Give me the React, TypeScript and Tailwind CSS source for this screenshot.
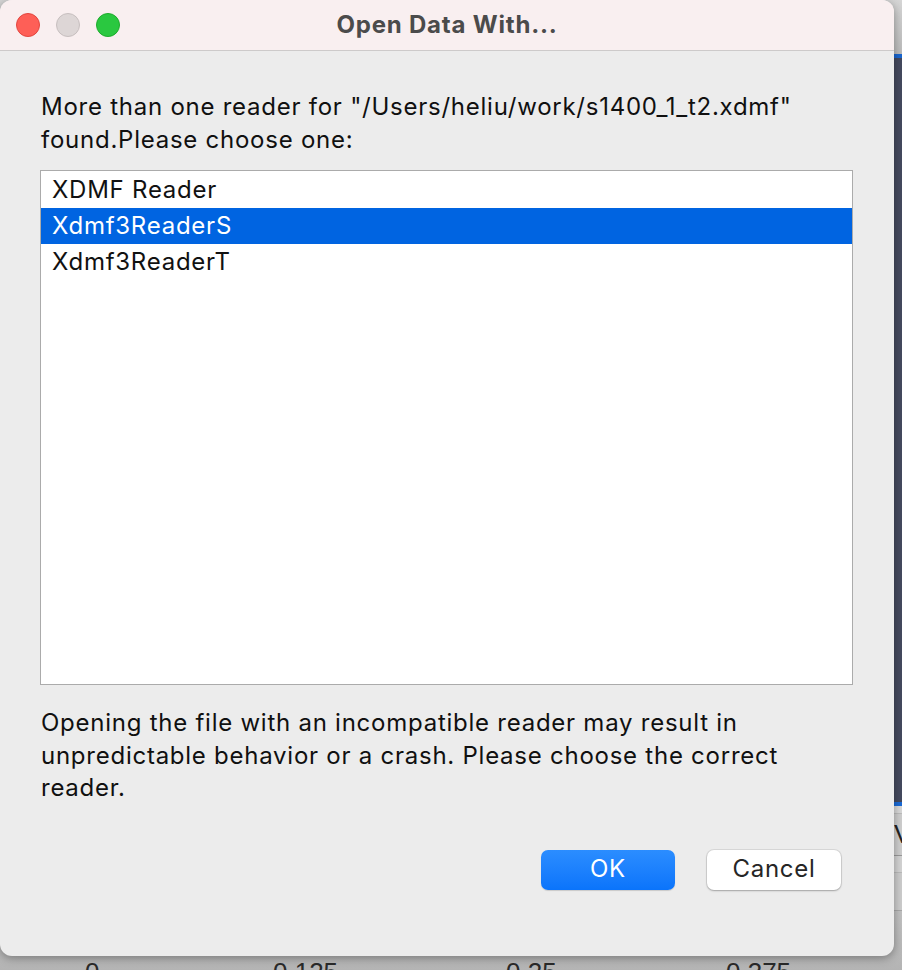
import { useState } from "react";

const readers = ["XDMF Reader", "Xdmf3ReaderS", "Xdmf3ReaderT"];

const axisLabels = [
    { label: "0", cls: "left-[85px]" },
    { label: "0.125", cls: "left-[273px]" },
    { label: "0.25", cls: "left-[506px]" },
    { label: "0.375", cls: "left-[726px]" },
];

const TrafficLights = () => (
    <div className="flex items-center gap-4 pl-4">
        <span className="w-6 h-6 rounded-full bg-[#fe5f57] border border-[#e2463f]" />
        <span className="w-6 h-6 rounded-full bg-[#ddd6d6] border border-[#c7bfbf]" />
        <span className="w-6 h-6 rounded-full bg-[#2ac840] border border-[#1eac2c]" />
    </div>
);

export default function App() {
    const [selected, setSelected] = useState(1);

    return (
        <div className="relative w-[902px] h-[970px] overflow-hidden bg-[#b9b9b9] font-['Inter','Noto_Sans',sans-serif]">
            {/* app behind the dialog */}
            <div className="flex flex-col h-full">
                <div className="h-[54px] bg-gradient-to-b from-[#d6d6d6] to-[#bcbcbc]" />
                <div className="h-[4px] bg-[#1966d0]" />
                <div className="h-[744px] bg-[#454a5f]" />
                <div className="h-[4px] bg-[#1a6ad6]" />
                <div className="h-[8px] bg-[#d9d9d9] border-b border-[#bdbdbd]" />
                <div className="h-[42px] bg-[#cfcfcf] border-b border-[#9a9a9a] flex items-center pl-[894px] text-[26px] text-[#222] font-['Liberation_Sans',sans-serif]">
                    Vi
                </div>
                <div className="h-[17px] bg-[#d4d4d4] border-b border-[#bbbbbb]" />
                <div className="h-[38px] bg-[#cdcdcd] border-b border-[#a8a8a8]" />
                <div className="relative flex-1 bg-gradient-to-b from-[#c2c2c2] to-[#b4b4b4]">
                    {axisLabels.map((a) => (
                        <span
                            key={a.label}
                            className={`absolute top-[48px] ${a.cls} text-[26px] leading-none text-[#2a2a2a] font-['Liberation_Sans',sans-serif]`}>
                            {a.label}
                        </span>
                    ))}
                </div>
            </div>

            {/* dialog window */}
            <div className="absolute left-0 top-0 w-[894px] h-[956px] rounded-[12px] overflow-hidden bg-[#ececec] shadow-[0_2px_10px_rgba(0,0,0,0.35)] flex flex-col">
                <div className="relative h-[51px] shrink-0 bg-[#f9eff0] border-b border-[#cdcaca] flex items-center">
                    <TrafficLights />
                    <div className="absolute inset-0 flex items-center justify-center text-[24px] tracking-[0.8px] font-bold text-[#4b4b4b]">
                        Open Data With...
                    </div>
                </div>

                <div className="flex flex-col px-[40px] pt-[40px] text-[24px] tracking-[0.75px] leading-[32.5px] text-[#101010]">
                    <p className="pl-px whitespace-nowrap">
                        More than one reader for "/Users/heliu/work/s1400_1_t2.xdmf"
                        <br />
                        found.Please choose one:
                    </p>

                    <div className="mt-[14px] w-[813px] h-[515px] bg-white border border-[#ababab] pt-px">
                        {readers.map((r, i) => (
                            <div
                                key={r}
                                onClick={() => setSelected(i)}
                                className={`h-[36px] pl-[11px] flex items-center ${i === selected ? "bg-[#0064e1] text-white" : "text-[#111]"}`}>
                                {r}
                            </div>
                        ))}
                    </div>

                    <p className="pl-px mt-[22px] whitespace-nowrap">
                        Opening the file with an incompatible reader may result in
                        <br />
                        unpredictable behavior or a crash. Please choose the correct
                        <br />
                        reader.
                    </p>

                    <div className="flex justify-end gap-8 mt-[45px] pr-[13px]">
                        <button className="w-[134px] h-[40px] rounded-[7px] bg-gradient-to-b from-[#2b8dff] to-[#0a74fb] text-white text-[24px] shadow-[0_1px_1px_rgba(0,0,0,0.15)]">
                            OK
                        </button>
                        <button className="w-[134px] h-[40px] rounded-[7px] bg-white text-[#262626] text-[24px] shadow-[0_0_0_1px_rgba(0,0,0,0.08),0_1px_2px_rgba(0,0,0,0.25)]">
                            Cancel
                        </button>
                    </div>
                </div>
            </div>
        </div>
    );
}
